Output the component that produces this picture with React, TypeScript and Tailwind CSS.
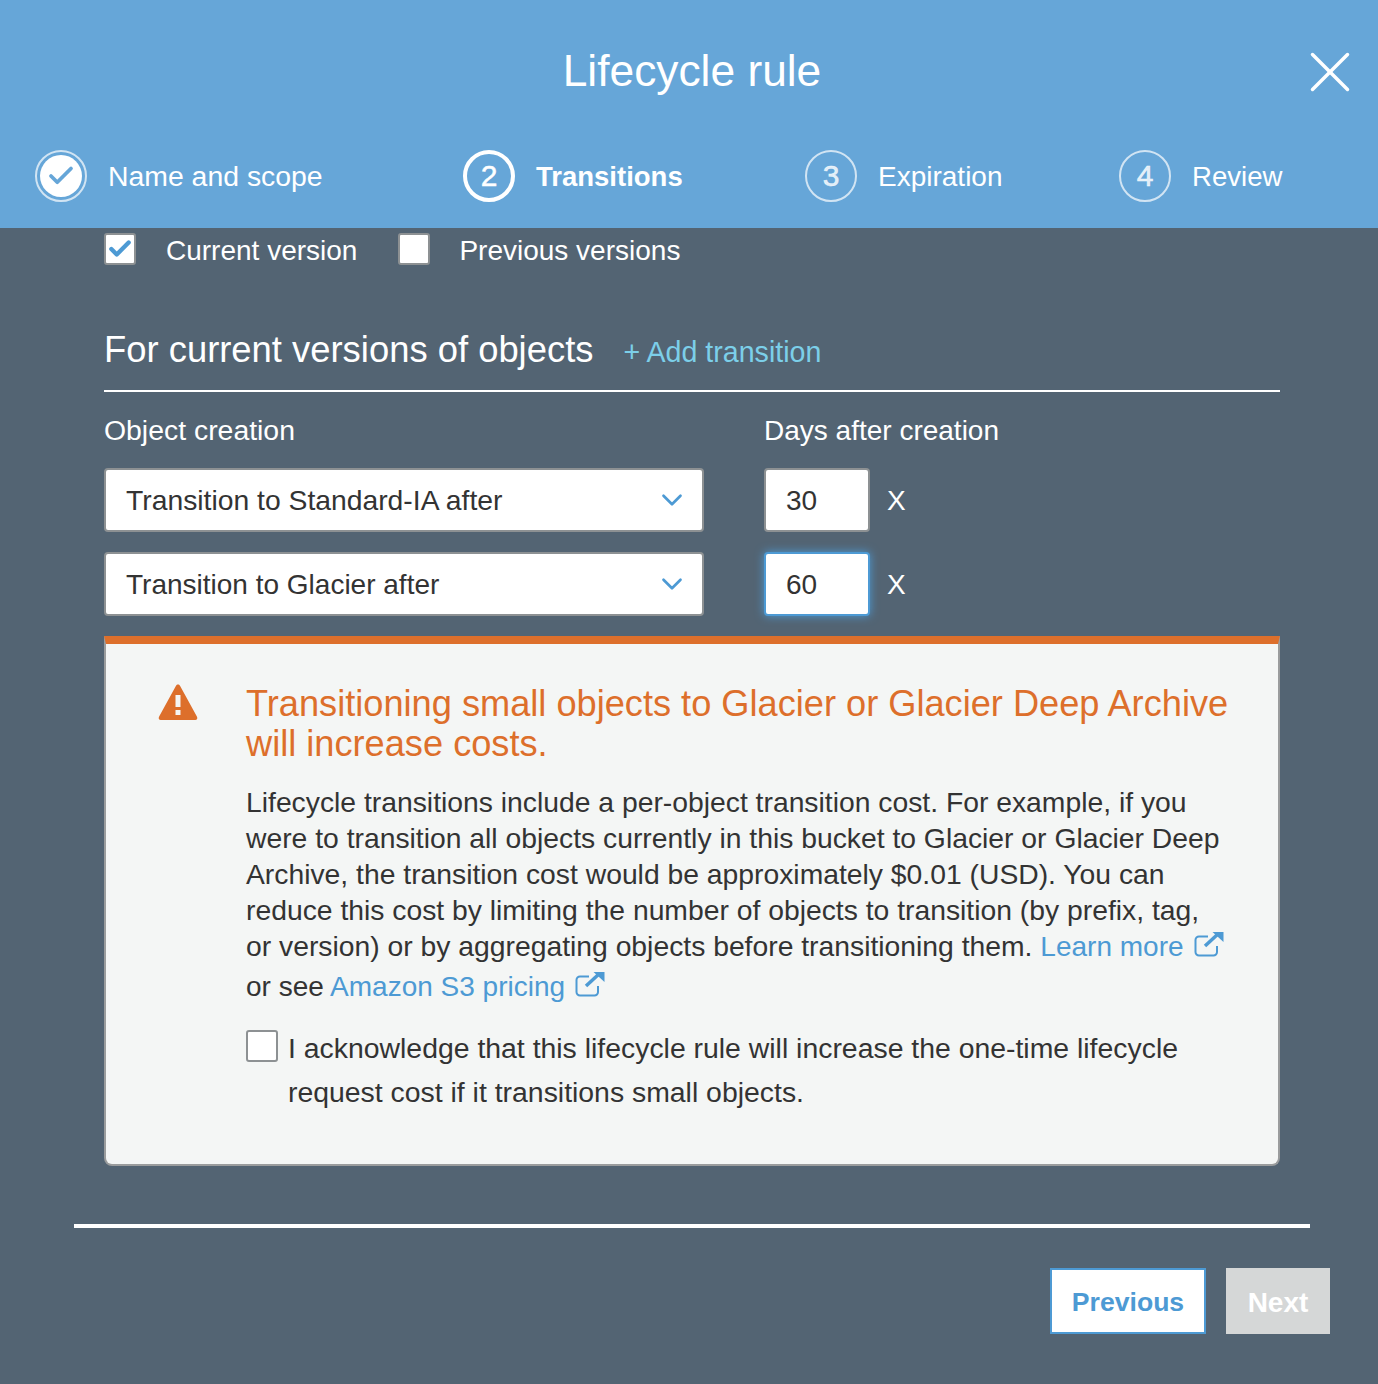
import { X, ChevronDown, Check } from 'lucide-react';

function StepCircle({ n, active }: { n: string; active?: boolean }) {
  return (
    <div className={`w-[52px] h-[52px] rounded-full flex items-center justify-center text-[30px] [-webkit-text-stroke:0.5px_currentColor] ${active ? 'border-[4px] border-white text-white' : 'border-[2px] border-white/70 text-white/80'}`}>
      {n}
    </div>
  );
}

function ExternalIcon() {
  return (
    <svg viewBox="0 0 30 26" className="inline-block w-[30px] h-[26px] ml-[10px] align-[-1px]" fill="none" stroke="#4d9ad4">
      <path d="M23 15v6a3.5 3.5 0 0 1-3.5 3.5H5A3.5 3.5 0 0 1 1.5 21V9A3.5 3.5 0 0 1 5 5.500h9" strokeWidth="2" />
      <path d="M11 15 24 3" strokeWidth="3.500" />
      <path d="M18.500 1H29.500V11Z" fill="#4d9ad4" stroke="none" />
    </svg>
  );
}

function TransitionRow({ label, days, focus, labelClass }: { label: string; days: string; focus?: boolean; labelClass: string }) {
  return (
    <div className="flex items-center h-[64px]">
      <div className="w-[600px] h-[64px] bg-white border-2 border-[#8d9193] rounded-[4px] flex items-center justify-between pl-[20px] pr-[13px] text-[#333]">
        <span className={labelClass}>{label}</span>
        <ChevronDown size={34} strokeWidth={1.900} color="#4d9ad4" />
      </div>
      <div className={`ml-[60px] w-[106px] h-[64px] bg-white border-2 rounded-[4px] flex items-center pl-[20px] pt-[2px] text-[#333] ${focus ? 'border-[#4d9ad4] shadow-[0_0_10px_#4d9ad4]' : 'border-[#8d9193]'}`}>
        {days}
      </div>
      <span className="ml-[17px] pt-[2px] text-white">X</span>
    </div>
  );
}

export default function App() {
  return (
    <div className="w-[1378px] h-[1384px] bg-[#536473] text-[28px] leading-[36px] overflow-hidden font-['Liberation_Sans',sans-serif]">
      <div className="h-[228px] bg-[#66a6d8] text-white relative">
        <div className="h-[146px] flex items-start justify-center pt-[43px]">
          <h1 className="text-[44.3px] leading-[56px] ml-[6px]">Lifecycle rule</h1>
        </div>
        <X size={70} strokeWidth={1.200} className="absolute left-[1295px] top-[37px]" color="#fff" />
        <div className="flex items-center pl-[35px] h-[60px]">
          <div className="w-[52px] h-[52px] rounded-full border-2 border-white/70 p-[3px]">
            <div className="w-full h-full rounded-full bg-white flex items-center justify-center">
              <Check size={30} strokeWidth={3} color="#66a6d8" />
            </div>
          </div>
          <span className="ml-[21px] w-[355px] text-[28.4px]">Name and scope</span>
          <StepCircle n="2" active />
          <span className="ml-[21px] w-[269px] pt-[2px] font-bold text-[27.5px]">Transitions</span>
          <StepCircle n="3" />
          <span className="ml-[21px] w-[241px] pt-[2px]">Expiration</span>
          <StepCircle n="4" />
          <span className="ml-[21px] pt-[2px] text-[27.6px]">Review</span>
        </div>
      </div>

      <div className="pl-[104px] pr-[98px] text-white">
        <div className="flex items-center h-[46px]">
          <div className="w-[32px] h-[32px] -mt-[4px] bg-white border-2 border-[#8d9193] rounded-[3px] flex items-center justify-center">
            <Check size={26} strokeWidth={4} color="#4d9ad4" />
          </div>
          <span className="ml-[30px]">Current version</span>
          <div className="ml-[41px] w-[32px] h-[32px] -mt-[4px] bg-white border-2 border-[#8d9193] rounded-[3px]" />
          <span className="ml-[29px]">Previous versions</span>
        </div>

        <div className="flex items-baseline h-[118px] pt-[53px] border-b-2 border-white">
          <h2 className="text-[36.4px] leading-[46px]">For current versions of objects</h2>
          <span className="ml-[30px] text-[28.6px] text-[#7ccfe9]">+ Add transition</span>
        </div>

        <div className="flex pt-[20px] h-[76px]">
          <span className="w-[660px] text-[28.4px]">Object creation</span>
          <span className="pt-[1px]">Days after creation</span>
        </div>
        <div className="flex flex-col gap-[20px]">
          <TransitionRow label="Transition to Standard-IA after" days="30" labelClass="text-[28.3px]" />
          <TransitionRow label="Transition to Glacier after" days="60" focus labelClass="pt-[2px]" />
        </div>

        <div className="mt-[20px] h-[530px] bg-[#f4f6f5] border-2 border-t-[8px] border-[#9a9c9d] border-t-[#dd6f2b] rounded-b-[8px] flex text-[#333]">
          <div className="w-[140px] pl-[52px] pt-[39px] shrink-0">
            <svg viewBox="0 0 40 38" className="w-[40px] h-[38px]">
              <path d="M20 1.500c.9 0 1.500.5 2 1.300l17 31c.8 1.500 0 3.200-1.700 3.200H2.700C1 37 .2 35.300 1 33.800l17-31c.5-.8 1.100-1.300 2-1.300Z" fill="#dd6f2b" />
              <rect x="17.500" y="12" width="5" height="12" fill="#f4f6f5" />
              <rect x="17.500" y="27" width="5" height="5" fill="#f4f6f5" />
            </svg>
          </div>
          <div className="pt-[40px]">
            <h3 className="text-[36.2px] leading-[40px] text-[#dd6f2b]">
              Transitioning small objects to Glacier or Glacier Deep Archive<br />will increase costs.
            </h3>
            <p className="mt-[20px] text-[28.3px]">
              Lifecycle transitions include a per-object transition cost. For example, if you<br />
              were to transition all objects currently in this bucket to Glacier or Glacier Deep<br />
              Archive, the transition cost would be approximately $0.01 (USD). You can<br />
              reduce this cost by limiting the number of objects to transition (by prefix, tag,<br />
              or version) or by aggregating objects before transitioning them.{' '}
              <span className="text-[#4d9ad4] text-[28px]">Learn more<ExternalIcon /></span><br />
              <span className="block mt-[4px] text-[28px]">or see <span className="text-[#4d9ad4]">Amazon S3 pricing<ExternalIcon /></span></span>
            </p>
            <div className="flex mt-[25px] leading-[44px]">
              <div className="w-[32px] h-[32px] bg-white border-2 border-[#8d9193] rounded-[3px] shrink-0" />
              <span className="ml-[10px] -mt-[4px] text-[28.4px]">
                I acknowledge that this lifecycle rule will increase the one-time lifecycle<br />
                request cost if it transitions small objects.
              </span>
            </div>
          </div>
        </div>
      </div>

      <div className="ml-[74px] w-[1236px] mt-[58px] h-[4px] bg-white" />
      <div className="flex justify-end gap-[20px] pr-[48px] mt-[40px]">
        <button className="w-[156px] h-[66px] pt-[2px] bg-white border-2 border-[#4d9ad4] text-[#4d9ad4] text-[26.6px] font-bold">Previous</button>
        <button className="w-[104px] h-[66px] pt-[4px] bg-[#d5d7d7] text-white font-bold">Next</button>
      </div>
    </div>
  );
}
